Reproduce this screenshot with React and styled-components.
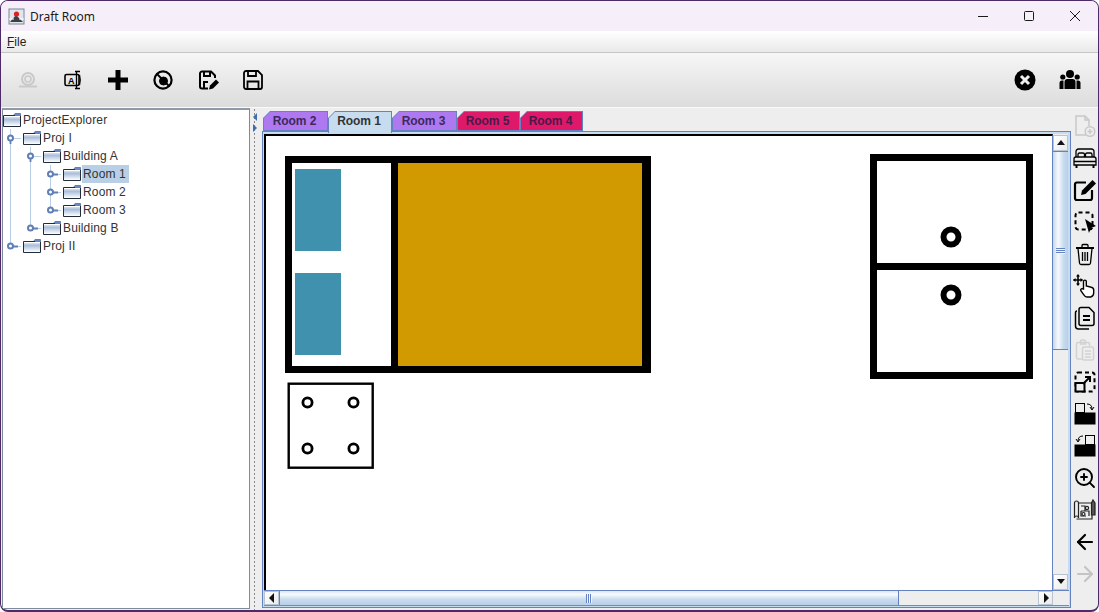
import React from "react";
import styled, { createGlobalStyle } from "styled-components";
import { ArrowLeft, ArrowRight, ZoomIn } from "lucide-react";

const GlobalStyle = createGlobalStyle`
  html, body {
    margin: 0;
    padding: 0;
    background: #fff;
  }
  * {
    box-sizing: border-box;
  }
`;

const Window = styled.div`
  width: 1099px;
  height: 612px;
  display: flex;
  flex-direction: column;
  overflow: hidden;
  border: 1px solid #4c2b68;
  border-bottom-width: 2px;
  border-radius: 8px;
  background: #eeeeee;
  font-family: "Liberation Sans", Arial, sans-serif;
  color: #333;
`;

const TitleBar = styled.div`
  height: 30px;
  flex: none;
  display: flex;
  align-items: center;
  padding-left: 7px;
  background: #f6eff9;
  font-family: "Noto Sans", "Open Sans", sans-serif;
  font-size: 12px;
  color: #1a1a1a;
`;

const AppTitle = styled.span`
  margin-left: 5px;
  flex: 1;
`;

const WindowButton = styled.div`
  width: 46px;
  height: 30px;
  display: flex;
  align-items: center;
  justify-content: center;
`;

const MenuBar = styled.div`
  height: 22px;
  flex: none;
  display: flex;
  align-items: center;
  padding-left: 6px;
  background: linear-gradient(#ffffff, #e9e9e9);
  border-bottom: 1px solid #c6c6c6;
  font-size: 12px;
  color: #222;

  u {
    text-underline-offset: 1px;
  }
`;

const ToolBar = styled.div`
  height: 55px;
  flex: none;
  display: flex;
  align-items: center;
  padding: 0 6px 0 4px;
  background: linear-gradient(#f6f6f6, #dcdcdc);
  border-bottom: 1px solid #fafafa;
`;

const ToolButton = styled.div`
  width: 45px;
  height: 32px;
  display: flex;
  align-items: center;
  justify-content: center;
  flex: none;
  color: #000;
`;

const ToolSpacer = styled.div`
  flex: 1;
`;

const Main = styled.div`
  flex: 1;
  min-height: 0;
  display: flex;
`;

const TreePanel = styled.div`
  width: 248px;
  margin: 0 0 1px 1px;
  padding-top: 1px;
  flex: none;
  background: #fff;
  border: 1px solid #7d8c9c;
  border-top: 2px solid #8e9aa8;
  font-size: 12px;
  letter-spacing: 0.15px;
`;

const TreeRow = styled.div`
  height: 18px;
  display: flex;
  align-items: center;
`;

const TreeLabel = styled.span`
  margin-left: 1px;
  padding: 0 3px 0 1px;
  height: 18px;
  line-height: 18px;
  white-space: nowrap;
  background: ${(props) => (props.$selected ? "#b8cfe5" : "transparent")};
`;

const Guide = styled.svg`
  width: 20px;
  height: 18px;
  flex: none;
  display: block;
`;

const Splitter = styled.div`
  width: 11px;
  flex: none;
  background-color: #eeeeee;
  background-image: radial-gradient(#8a8a8a 0.6px, transparent 0.8px);
  background-size: 3px 4px;
  background-position: 3px 0;
  background-repeat: repeat-y;
  display: flex;
  flex-direction: column;
  padding: 5px 0 0 3px;
  gap: 3px;
`;

const SplitArrow = styled.div`
  width: 0;
  height: 0;
  border-top: 4px solid transparent;
  border-bottom: 4px solid transparent;
  ${(props) =>
    props.$dir === "left"
      ? "border-right: 4px solid #3f6db0;"
      : "border-left: 4px solid #3f6db0;"}
`;

const Center = styled.div`
  width: 810px;
  flex: none;
  display: flex;
  flex-direction: column;
`;

const TabStrip = styled.div`
  height: 23px;
  flex: none;
  display: flex;
  align-items: flex-end;
  padding-left: 2px;
  position: relative;
  z-index: 1;
`;

const TabShell = styled.div`
  width: ${(props) => props.$width}px;
  height: ${(props) => (props.$selected ? 22 : 20)}px;
  margin-bottom: ${(props) => (props.$selected ? -2 : 0)}px;
  padding: 1px 1px ${(props) => (props.$selected ? 0 : 1)}px 1px;
  flex: none;
  background: #6382bf;
  clip-path: polygon(7px 0, 100% 0, 100% 100%, 0 100%, 0 7px);
`;

const TabFace = styled.div`
  height: 100%;
  display: flex;
  align-items: center;
  justify-content: center;
  padding: 0 2px ${(props) => (props.$selected ? 3 : 0)}px 0;
  background: ${(props) => props.$color};
  clip-path: polygon(6px 0, 100% 0, 100% 100%, 0 100%, 0 6px);
  font-size: 12px;
  font-weight: bold;
  letter-spacing: -0.1px;
  color: ${(props) => props.$ink};
`;

const TabPane = styled.div`
  flex: 1;
  min-height: 0;
  margin: 0 0 2px 1px;
  padding: 2px 1px 1px 1px;
  border: 1px solid #6382bf;
  background: #c8dcf0;
  display: grid;
  grid-template-columns: 1fr 16px;
  grid-template-rows: 1fr 16px;
`;

const Canvas = styled.div`
  min-width: 0;
  min-height: 0;
  background: #fff;
  border-top: 2px solid #000;
  border-left: 2px solid #000;
  border-right: 1px solid #6382bf;
  overflow: hidden;
`;

const Drawing = styled.svg`
  display: block;
`;

const VBar = styled.div`
  display: flex;
  flex-direction: column;
  padding-top: 1px;
  background: #eeeeee;
  border-right: 1px solid #c8dcf0;
`;

const HBar = styled.div`
  display: flex;
  background: #eeeeee;
  border-top: 1px solid #6382bf;
  border-bottom: 1px solid #7d8c9c;
`;

const Corner = styled.div`
  background: #eeeeee;
  border-top: 1px solid #6382bf;
  border-bottom: 1px solid #7d8c9c;
`;

const ArrowButton = styled.div`
  width: ${(props) => (props.$horizontal ? "15px" : "100%")};
  height: ${(props) => (props.$horizontal ? "100%" : "16px")};
  flex: none;
  display: flex;
  align-items: center;
  justify-content: center;
  background: linear-gradient(135deg, #fff, #eaeaea);
  border: 1px solid #b8c4d2;
`;

const Thumb = styled.div`
  display: flex;
  align-items: center;
  justify-content: center;
  flex: none;
  ${(props) =>
    props.$horizontal
      ? `
    width: ${props.$size}px;
    border-left: 1px solid #6382bf;
    border-right: 1px solid #6382bf;
    background: linear-gradient(#dde8f4, #f6fafd 25%, #c8dcf0 60%, #b8cfe5);
  `
      : `
    height: ${props.$size}px;
    border-top: 1px solid #6382bf;
    border-bottom: 1px solid #6382bf;
    background: linear-gradient(90deg, #c4d6ea, #f6fafd 35%, #c8dcf0 70%, #b8cfe5);
  `}
`;

const Grip = styled.div`
  ${(props) =>
    props.$horizontal
      ? `
    width: 6px;
    height: 9px;
    background: repeating-linear-gradient(90deg, #6382bf 0 1px, #f2f6fb 1px 2px);
  `
      : `
    width: 9px;
    height: 6px;
    background: repeating-linear-gradient(#6382bf 0 1px, #f2f6fb 1px 2px);
  `}
`;

const Track = styled.div`
  flex: 1;
`;

const SideBar = styled.div`
  width: 26px;
  flex: none;
  display: flex;
  flex-direction: column;
  align-items: center;
  gap: 8px;
  padding: 6px 0 0 2px;
  color: #000;
`;

const SideIcon = styled.div`
  width: 24px;
  height: 24px;
  flex: none;
  display: flex;
  align-items: center;
  justify-content: center;
  color: ${(props) => (props.$disabled ? "#c4c4c4" : "#000")};
`;

const Triangle = ({ dir }) => {
  const points = {
    up: "1,7 9,7 5,2",
    down: "1,2 9,2 5,7",
    left: "7,0 7,10 2,5",
    right: "3,0 3,10 8,5",
  };
  return (
    <svg width="10" height="10" viewBox="0 0 10 10">
      <polygon points={points[dir]} fill="#111" />
    </svg>
  );
};

const Folder = () => (
  <svg width="18" height="14" viewBox="0 0 18 14" style={{ flex: "none" }}>
    <defs>
      <linearGradient id="folderFill" x1="0" y1="0" x2="0" y2="1">
        <stop offset="0" stopColor="#e8eef6" />
        <stop offset="0.35" stopColor="#a9bfdc" />
        <stop offset="1" stopColor="#ffffff" />
      </linearGradient>
    </defs>
    <path d="M10 3 L12 .5 H17.5 V3 Z" fill="#6a8ac0" stroke="#5f7fb5" />
    <path d="M.5 13.5 V2.5 H12 M.5 13.5 H17.5 V3" fill="none" stroke="#222c3a" />
    <rect x="1" y="3" width="16" height="10" fill="url(#folderFill)" />
    <path d="M1 3.5 H17" stroke="#ffffff" />
  </svg>
);

// one indent column of the tree: pipe, branch or last branch with a handle
const TreeGuide = ({ kind, open }) => {
  const line = "#b8cfe5";
  const handle = "#5f7fb5";
  return (
    <Guide viewBox="0 0 20 18">
      {kind !== "last" && <path d="M7.5 0 V18" stroke={line} />}
      {kind === "last" && <path d="M7.5 0 V9" stroke={line} />}
      {kind !== "pipe" && (
        <>
          <path d="M8 9.5 H18" stroke={line} />
          {open ? (
            <path d="M7.5 9 V15" stroke={handle} strokeWidth="1.8" />
          ) : (
            <path d="M8 9.5 H15" stroke={handle} strokeWidth="1.8" />
          )}
          <circle cx="7.5" cy="9" r="2.5" fill="#fff" stroke={handle} strokeWidth="2" />
        </>
      )}
    </Guide>
  );
};

const treeRows = [
  { label: "ProjectExplorer", guides: [] },
  { label: "Proj I", guides: ["branch"], open: true },
  { label: "Building A", guides: ["pipe", "branch"], open: true },
  { label: "Room 1", guides: ["pipe", "pipe", "branch"], selected: true },
  { label: "Room 2", guides: ["pipe", "pipe", "branch"] },
  { label: "Room 3", guides: ["pipe", "pipe", "last"] },
  { label: "Building B", guides: ["pipe", "last"] },
  { label: "Proj II", guides: ["last"] },
];

const tabs = [
  { label: "Room 2", width: 65, color: "#ae78f0", ink: "#3b2a5c" },
  { label: "Room 1", width: 64, color: "#c8dcf0", ink: "#333", selected: true },
  { label: "Room 3", width: 65, color: "#ae78f0", ink: "#3b2a5c" },
  { label: "Room 5", width: 63, color: "#e0186a", ink: "#4a1a48" },
  { label: "Room 4", width: 63, color: "#e0186a", ink: "#4a1a48" },
];

const IconCoil = () => (
  <svg width="24" height="24" viewBox="0 0 24 24" fill="none" stroke="#c9c9c9">
    <circle cx="12" cy="11" r="6" strokeWidth="2" />
    <circle cx="12" cy="11" r="3" strokeWidth="1.6" />
    <path d="M3 18.5 H21" strokeWidth="1.8" />
  </svg>
);

const IconTextBox = () => (
  <svg width="24" height="24" viewBox="0 0 24 24" fill="none" stroke="#000">
    <rect x="4" y="6.5" width="14" height="11" rx="1.5" strokeWidth="1.6" />
    <path d="M15.5 3.5 V20.5 M14 3.5 H19 M14 20.5 H19 M18.5 7 Q20 12 18.5 17" strokeWidth="1.3" />
    <text x="7" y="15.5" fontSize="9" fontWeight="bold" fontFamily="Liberation Sans" fill="#000" stroke="none">
      A
    </text>
  </svg>
);

const IconPlus = () => (
  <svg width="24" height="24" viewBox="0 0 24 24" fill="none" stroke="#000" strokeWidth="5">
    <path d="M12 2 V22 M2 12 H22" />
  </svg>
);

const IconNoCoil = () => (
  <svg width="24" height="24" viewBox="0 0 24 24" fill="none" stroke="#000">
    <circle cx="12" cy="12" r="8.6" strokeWidth="2.2" />
    <circle cx="12.5" cy="13" r="4" fill="#000" />
    <path d="M5.5 5.5 L18.5 18.5" strokeWidth="1.8" />
  </svg>
);

const IconSaveEdit = () => (
  <svg width="24" height="24" viewBox="0 0 24 24" fill="none" stroke="#000" strokeWidth="2">
    <path d="M12 20.5 H6 a2 2 0 0 1 -2 -2 V5.5 a2 2 0 0 1 2 -2 H15 L19 7.5 V10" />
    <path d="M8 4 V8 H14 V4" />
    <path d="M8 20 V14 H12" />
    <path d="M13 21.5 L14 17.5 L20 11.5 L23 14.5 L17 20.5 Z" fill="#000" stroke="none" />
  </svg>
);

const IconSave = () => (
  <svg width="24" height="24" viewBox="0 0 24 24" fill="none" stroke="#000" strokeWidth="1.8">
    <path d="M5 3 H17 L21 7 V19 a2 2 0 0 1 -2 2 H5 a2 2 0 0 1 -2 -2 V5 a2 2 0 0 1 2 -2 Z" />
    <path d="M7 3.5 V8 H15 V3.5" />
    <path d="M6.5 20.5 V13.5 H17.5 V20.5" />
  </svg>
);

const IconCloseFilled = () => (
  <svg width="24" height="24" viewBox="0 0 24 24">
    <circle cx="12" cy="12" r="10.5" fill="#000" />
    <path d="M8 8 L16 16 M16 8 L8 16" stroke="#eee" strokeWidth="3" />
  </svg>
);

const IconGroup = () => (
  <svg width="24" height="24" viewBox="0 0 24 24" fill="#000">
    <circle cx="12" cy="6" r="4" />
    <circle cx="4.8" cy="9" r="2.6" />
    <circle cx="19.2" cy="9" r="2.6" />
    <path d="M6.5 21 V14 Q6.5 11 9.5 11 H14.5 Q17.5 11 17.5 14 V21 Z" />
    <path d="M1.5 21 V15 Q1.5 12.5 4 12.5 H5.5 V21 Z" />
    <path d="M22.5 21 V15 Q22.5 12.5 20 12.5 H18.5 V21 Z" />
  </svg>
);

const IconFileAdd = () => (
  <svg width="24" height="24" viewBox="0 0 24 24" fill="none" stroke="#c8c8c8" strokeWidth="1.5">
    <path d="M13 21 H3 V2 H12 L16 6 V12" />
    <path d="M12 2 V6 H16" />
    <circle cx="17" cy="17.5" r="4.8" />
    <path d="M17 15 V20 M14.5 17.5 H19.5" />
  </svg>
);

const IconBed = () => (
  <svg width="24" height="24" viewBox="0 0 24 24" fill="none" stroke="#000" strokeWidth="1.3">
    <path d="M3 11 V5.5 a2.5 2.5 0 0 1 2.5 -2.5 H18.5 a2.5 2.5 0 0 1 2.5 2.5 V11" />
    <path d="M5 11 V8.5 q0 -1.5 1.5 -1.5 H10 q1.5 0 1.5 1.5 V11 M12.5 11 V8.5 q0 -1.5 1.5 -1.5 H17.5 q1.5 0 1.5 1.5 V11" />
    <path d="M3 11 H21 q2 0 2 2 V19 H1 V13 q0 -2 2 -2 Z" />
    <path d="M1 15.5 H23" />
    <path d="M3.5 19 V22 M20.5 19 V22" strokeWidth="2" />
  </svg>
);

const IconEdit = () => (
  <svg width="24" height="24" viewBox="0 0 24 24" fill="none" stroke="#000" strokeWidth="2.2">
    <path d="M13 4.5 H4 a2 2 0 0 0 -2 2 V20 a2 2 0 0 0 2 2 H17 a2 2 0 0 0 2 -2 V12" />
    <path d="M8 17 L9 12.5 L19.5 2 L23 5.5 L12.5 16 Z" fill="#000" stroke="none" />
  </svg>
);

const IconSelect = () => (
  <svg width="24" height="24" viewBox="0 0 24 24" fill="none" stroke="#000" strokeWidth="2">
    <rect x="2.5" y="2.5" width="17" height="17" rx="3" strokeDasharray="4 3" />
    <path d="M12 9 L23 16 L18 18 L16 23 Z" fill="#000" stroke="none" />
  </svg>
);

const IconTrash = () => (
  <svg width="24" height="24" viewBox="0 0 24 24" fill="none" stroke="#000" strokeWidth="1.3">
    <path d="M3 6 H21" strokeWidth="1.8" />
    <path d="M9 5.5 V3.5 q0 -1 1 -1 H14 q1 0 1 1 V5.5" />
    <path d="M5 6.5 L6.5 21 q.2 1.5 1.5 1.5 H16 q1.3 0 1.5 -1.5 L19 6.5" />
    <path d="M9.5 10 V19 M12 10 V19 M14.5 10 V19" />
  </svg>
);

const IconMoveHand = () => (
  <svg width="24" height="24" viewBox="0 0 24 24" fill="none" stroke="#000" strokeWidth="1.4">
    <path d="M5 1 V11 M0.5 6 H9.5" strokeWidth="1.6" />
    <path d="M5 0 L3 2.5 H7 Z M5 12 L3 9.5 H7 Z M0 6 L2.5 4 V8 Z M10 6 L7.5 4 V8 Z" fill="#000" stroke="none" />
    <path d="M10.5 15 V7.5 a1.4 1.4 0 0 1 2.8 0 V12 l5 1.2 a3 3 0 0 1 2.4 3 V19 q0 3 -3 4 H14 q-2 0 -3 -2 l-3 -4 q-1 -2 1 -2.4 Z" fill="#fff" />
  </svg>
);

const IconDocs = () => (
  <svg width="24" height="24" viewBox="0 0 24 24" fill="none" stroke="#000" strokeWidth="1.5">
    <path d="M4 5 Q2.5 5 2.5 7 V20 Q2.5 23 5.5 23 H16" />
    <path d="M6 3.5 Q6 1.5 8 1.5 H16 L21 6.5 V17.5 Q21 19.5 19 19.5 H8 Q6 19.5 6 17.5 Z" />
    <path d="M10 10 H17 M10 14 H17" strokeWidth="1.8" />
  </svg>
);

const IconPaste = () => (
  <svg width="24" height="24" viewBox="0 0 24 24" fill="none" stroke="#d2d2d2" strokeWidth="1.5">
    <path d="M9 21 H5 Q3.5 21 3.5 19.5 V6 Q3.5 4.5 5 4.5 H15 Q16.5 4.5 16.5 6 V8" />
    <path d="M7.5 6 V3.5 Q7.5 2 9 2 H11 Q12.5 2 12.5 3.5 V6 Z" />
    <rect x="9.5" y="9" width="11" height="13" rx="1.5" />
    <path d="M12 13 H18 M12 16 H18 M12 19 H18" />
  </svg>
);

const IconResize = () => (
  <svg width="24" height="24" viewBox="0 0 24 24" fill="none" stroke="#000" strokeWidth="2">
    <rect x="2.5" y="2.5" width="19" height="19" rx="2.5" strokeDasharray="4 3" />
    <rect x="2.5" y="13" width="9" height="8.5" fill="#eee" />
    <path d="M10 14 L17 7 M12 7 H17 V12" />
  </svg>
);

const IconLayer = ({ flip }) => (
  <svg width="24" height="24" viewBox="0 0 24 24" fill="none" stroke="#000">
    <rect x={flip ? "12.5" : "2.5"} y="1.5" width="9" height="9" strokeWidth="1" />
    <rect x="2" y="11" width="20" height="11" fill="#000" />
    <path
      d={flip ? "M10 2 Q5 2 5 7 M3 5 L5 8 L7 5" : "M14 2 Q19 2 19 7 M17 5 L19 8 L21 5"}
      strokeWidth="1"
    />
  </svg>
);

const IconBlueprint = () => (
  <svg width="24" height="24" viewBox="0 0 24 24" fill="none" stroke="#222" strokeWidth="1.2">
    <path d="M1.5 5 a2 2 0 0 1 4 0 V20 a2 2 0 0 0 -4 0 Z" />
    <path d="M5.5 5 H19 V21 H3.5" />
    <path d="M8 8 H12 V13 M8 13 H16 V18 M8 13 V18 H13" />
    <circle cx="10.5" cy="16" r="1.5" />
    <path d="M20 2 L22 5 V17 H18.5 V5 Z" fill="#555" />
    <circle cx="14" cy="10" r="1.6" />
  </svg>
);

const IconAppLogo = () => (
  <svg width="17" height="18" viewBox="0 0 17 18">
    <rect x="1" y="2" width="15" height="15" fill="#dfe6ee" stroke="#7a8694" />
    <path d="M2 15 L8 8 L15 15 Z" fill="#3a3f48" />
    <path d="M1 12 H6 M11 12 H16" stroke="#fff" />
    <circle cx="8.5" cy="7" r="2.6" fill="#e01f1f" />
  </svg>
);

const sideIcons = [
  { node: <IconFileAdd />, disabled: true },
  { node: <IconBed /> },
  { node: <IconEdit /> },
  { node: <IconSelect /> },
  { node: <IconTrash /> },
  { node: <IconMoveHand /> },
  { node: <IconDocs /> },
  { node: <IconPaste />, disabled: true },
  { node: <IconResize /> },
  { node: <IconLayer /> },
  { node: <IconLayer flip /> },
  { node: <ZoomIn size={24} strokeWidth={1.9} /> },
  { node: <IconBlueprint /> },
  { node: <ArrowLeft size={26} strokeWidth={2.2} /> },
  { node: <ArrowRight size={26} strokeWidth={2.2} />, disabled: true },
];

// floor plan, coordinates are the same as the page so they are easy to check
const FloorPlan = () => (
  <Drawing width="787" height="454" viewBox="266 136 787 454" shapeRendering="crispEdges">
    <rect x="285" y="156" width="366" height="217" fill="#000" />
    <rect x="292" y="163" width="99" height="203" fill="#fff" />
    <rect x="398" y="163" width="244" height="203" fill="#d09a00" />
    <rect x="295" y="169" width="46" height="82" fill="#3f91ae" />
    <rect x="295" y="273" width="46" height="82" fill="#3f91ae" />

    <rect x="873.5" y="157.5" width="156" height="218" fill="#fff" stroke="#000" strokeWidth="7" />
    <rect x="870" y="263" width="163" height="7" fill="#000" />
    <g shapeRendering="auto">
      <circle cx="951" cy="237" r="7.5" fill="#fff" stroke="#000" strokeWidth="6" />
      <circle cx="951" cy="295" r="7.5" fill="#fff" stroke="#000" strokeWidth="6" />
    </g>

    <g shapeRendering="auto" fill="#fff" stroke="#000">
      <rect x="288.7" y="383.7" width="84" height="84" strokeWidth="2.4" />
      <g strokeWidth="2.8">
        <circle cx="307.5" cy="402.5" r="4.6" />
        <circle cx="353.5" cy="402.5" r="4.6" />
        <circle cx="307.5" cy="448.5" r="4.6" />
        <circle cx="353.5" cy="448.5" r="4.6" />
      </g>
    </g>
  </Drawing>
);

export default function App() {
  return (
    <>
      <GlobalStyle />
      <Window>
        <TitleBar>
          <IconAppLogo />
          <AppTitle>Draft Room</AppTitle>
          <WindowButton>
            <svg width="12" height="12" viewBox="0 0 12 12" shapeRendering="crispEdges">
              <path d="M1 6.5 H11" stroke="#1a1a1a" />
            </svg>
          </WindowButton>
          <WindowButton>
            <svg width="12" height="12" viewBox="0 0 12 12">
              <rect x="1.5" y="1.5" width="9" height="9" rx="1" fill="none" stroke="#1a1a1a" />
            </svg>
          </WindowButton>
          <WindowButton>
            <svg width="12" height="12" viewBox="0 0 12 12">
              <path d="M1 1 L11 11 M11 1 L1 11" stroke="#1a1a1a" />
            </svg>
          </WindowButton>
        </TitleBar>
        <MenuBar>
          <span>
            <u>F</u>ile
          </span>
        </MenuBar>
        <ToolBar>
          <ToolButton>
            <IconCoil />
          </ToolButton>
          <ToolButton>
            <IconTextBox />
          </ToolButton>
          <ToolButton>
            <IconPlus />
          </ToolButton>
          <ToolButton>
            <IconNoCoil />
          </ToolButton>
          <ToolButton>
            <IconSaveEdit />
          </ToolButton>
          <ToolButton>
            <IconSave />
          </ToolButton>
          <ToolSpacer />
          <ToolButton>
            <IconCloseFilled />
          </ToolButton>
          <ToolButton>
            <IconGroup />
          </ToolButton>
        </ToolBar>
        <Main>
          <TreePanel>
            {treeRows.map((row) => (
              <TreeRow key={row.label}>
                {row.guides.map((kind, i) => (
                  <TreeGuide
                    key={i}
                    kind={kind}
                    open={row.open && i === row.guides.length - 1}
                  />
                ))}
                <Folder />
                <TreeLabel $selected={row.selected}>{row.label}</TreeLabel>
              </TreeRow>
            ))}
          </TreePanel>
          <Splitter>
            <SplitArrow $dir="left" />
            <SplitArrow $dir="right" />
          </Splitter>
          <Center>
            <TabStrip>
              {tabs.map((tab) => (
                <TabShell key={tab.label} $width={tab.width} $selected={tab.selected}>
                  <TabFace $color={tab.color} $ink={tab.ink} $selected={tab.selected}>
                    {tab.label}
                  </TabFace>
                </TabShell>
              ))}
            </TabStrip>
            <TabPane>
              <Canvas>
                <FloorPlan />
              </Canvas>
              <VBar>
                <ArrowButton>
                  <Triangle dir="up" />
                </ArrowButton>
                <Thumb $size={199}>
                  <Grip />
                </Thumb>
                <Track />
                <ArrowButton>
                  <Triangle dir="down" />
                </ArrowButton>
              </VBar>
              <HBar>
                <ArrowButton $horizontal>
                  <Triangle dir="left" />
                </ArrowButton>
                <Thumb $horizontal $size={620}>
                  <Grip $horizontal />
                </Thumb>
                <Track />
                <ArrowButton $horizontal>
                  <Triangle dir="right" />
                </ArrowButton>
              </HBar>
              <Corner />
            </TabPane>
          </Center>
          <SideBar>
            {sideIcons.map((icon, i) => (
              <SideIcon key={i} $disabled={icon.disabled}>
                {icon.node}
              </SideIcon>
            ))}
          </SideBar>
        </Main>
      </Window>
    </>
  );
}
